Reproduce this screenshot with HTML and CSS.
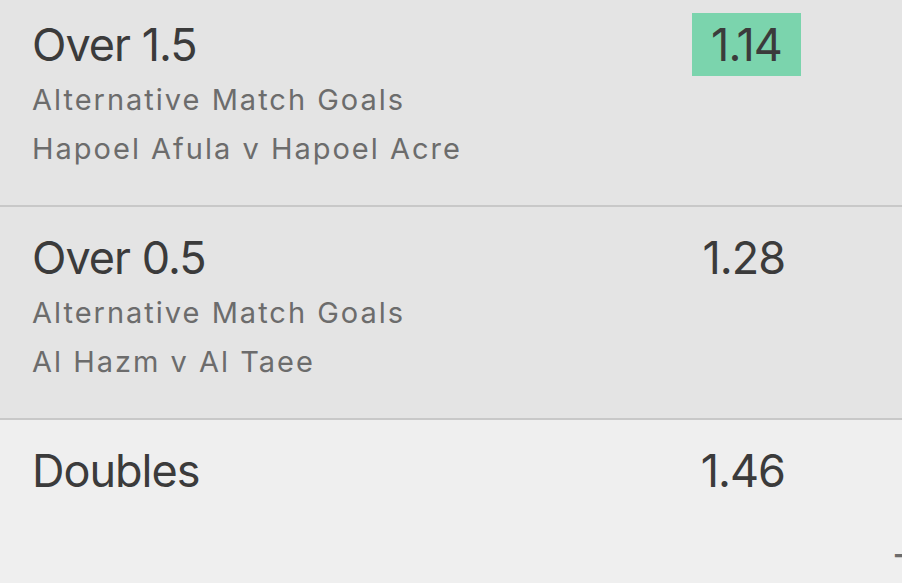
FILE: index.html
```html
<!DOCTYPE html>
<html>
<head>
<meta charset="utf-8">
<link rel="stylesheet" href="styles.css">
</head>
<body>
<div class="list">
  <div class="row">
    <div class="info">
      <div class="title">Over 1.5</div>
      <div class="sub first">Alternative Match Goals</div>
      <div class="sub">Hapoel Afula v Hapoel Acre</div>
    </div>
    <div class="odds selected">1.14</div>
  </div>
  <div class="row">
    <div class="info">
      <div class="title">Over 0.5</div>
      <div class="sub first">Alternative Match Goals</div>
      <div class="sub">Al Hazm v Al Taee</div>
    </div>
    <div class="odds">1.28</div>
  </div>
  <div class="row last">
    <div class="info">
      <div class="title">Doubles</div>
    </div>
    <div class="odds">1.46</div>
    <div class="peek">Total</div>
  </div>
</div>
</body>
</html>
```
FILE: styles.css
```css
html, body {
  margin: 0;
  padding: 0;
  overflow: hidden;
  background: #efefef;
  width: 902px;
  height: 583px;
}
body {
  font-family: Inter, "Noto Sans", sans-serif;
  color: #3b3b3b;
}
.list {
  margin-top: -6px;
}
.row {
  position: relative;
  display: flex;
  justify-content: space-between;
  align-items: flex-start;
  box-sizing: border-box;
  height: 213px;
  padding: 19px 101px 0 32px;
  background: #e4e4e4;
  border-bottom: 2px solid #c8c8c8;
}
.row.last {
  background: #efefef;
  border-bottom: none;
}
.title {
  font-size: 45px;
  line-height: 63px;
  letter-spacing: -1px;
  color: #3b3b3b;
}
.sub {
  font-size: 29px;
  line-height: 49px;
  color: #6c6c6c;
  letter-spacing: 2px;
}
.sub.first {
  line-height: 48px;
}
.odds {
  box-sizing: border-box;
  min-width: 109px;
  text-align: right;
  font-size: 45px;
  line-height: 63px;
  letter-spacing: -1px;
  padding: 0 16px 0 12px;
  color: #3b3b3b;
}
.odds.selected {
  background: #7bd4ad;
  text-align: center;
  padding: 0 14px;
}
.peek {
  position: absolute;
  left: 893px;
  top: 125px;
  font-size: 40px;
  line-height: 48px;
  color: #6c6c6c;
  white-space: nowrap;
}
```
